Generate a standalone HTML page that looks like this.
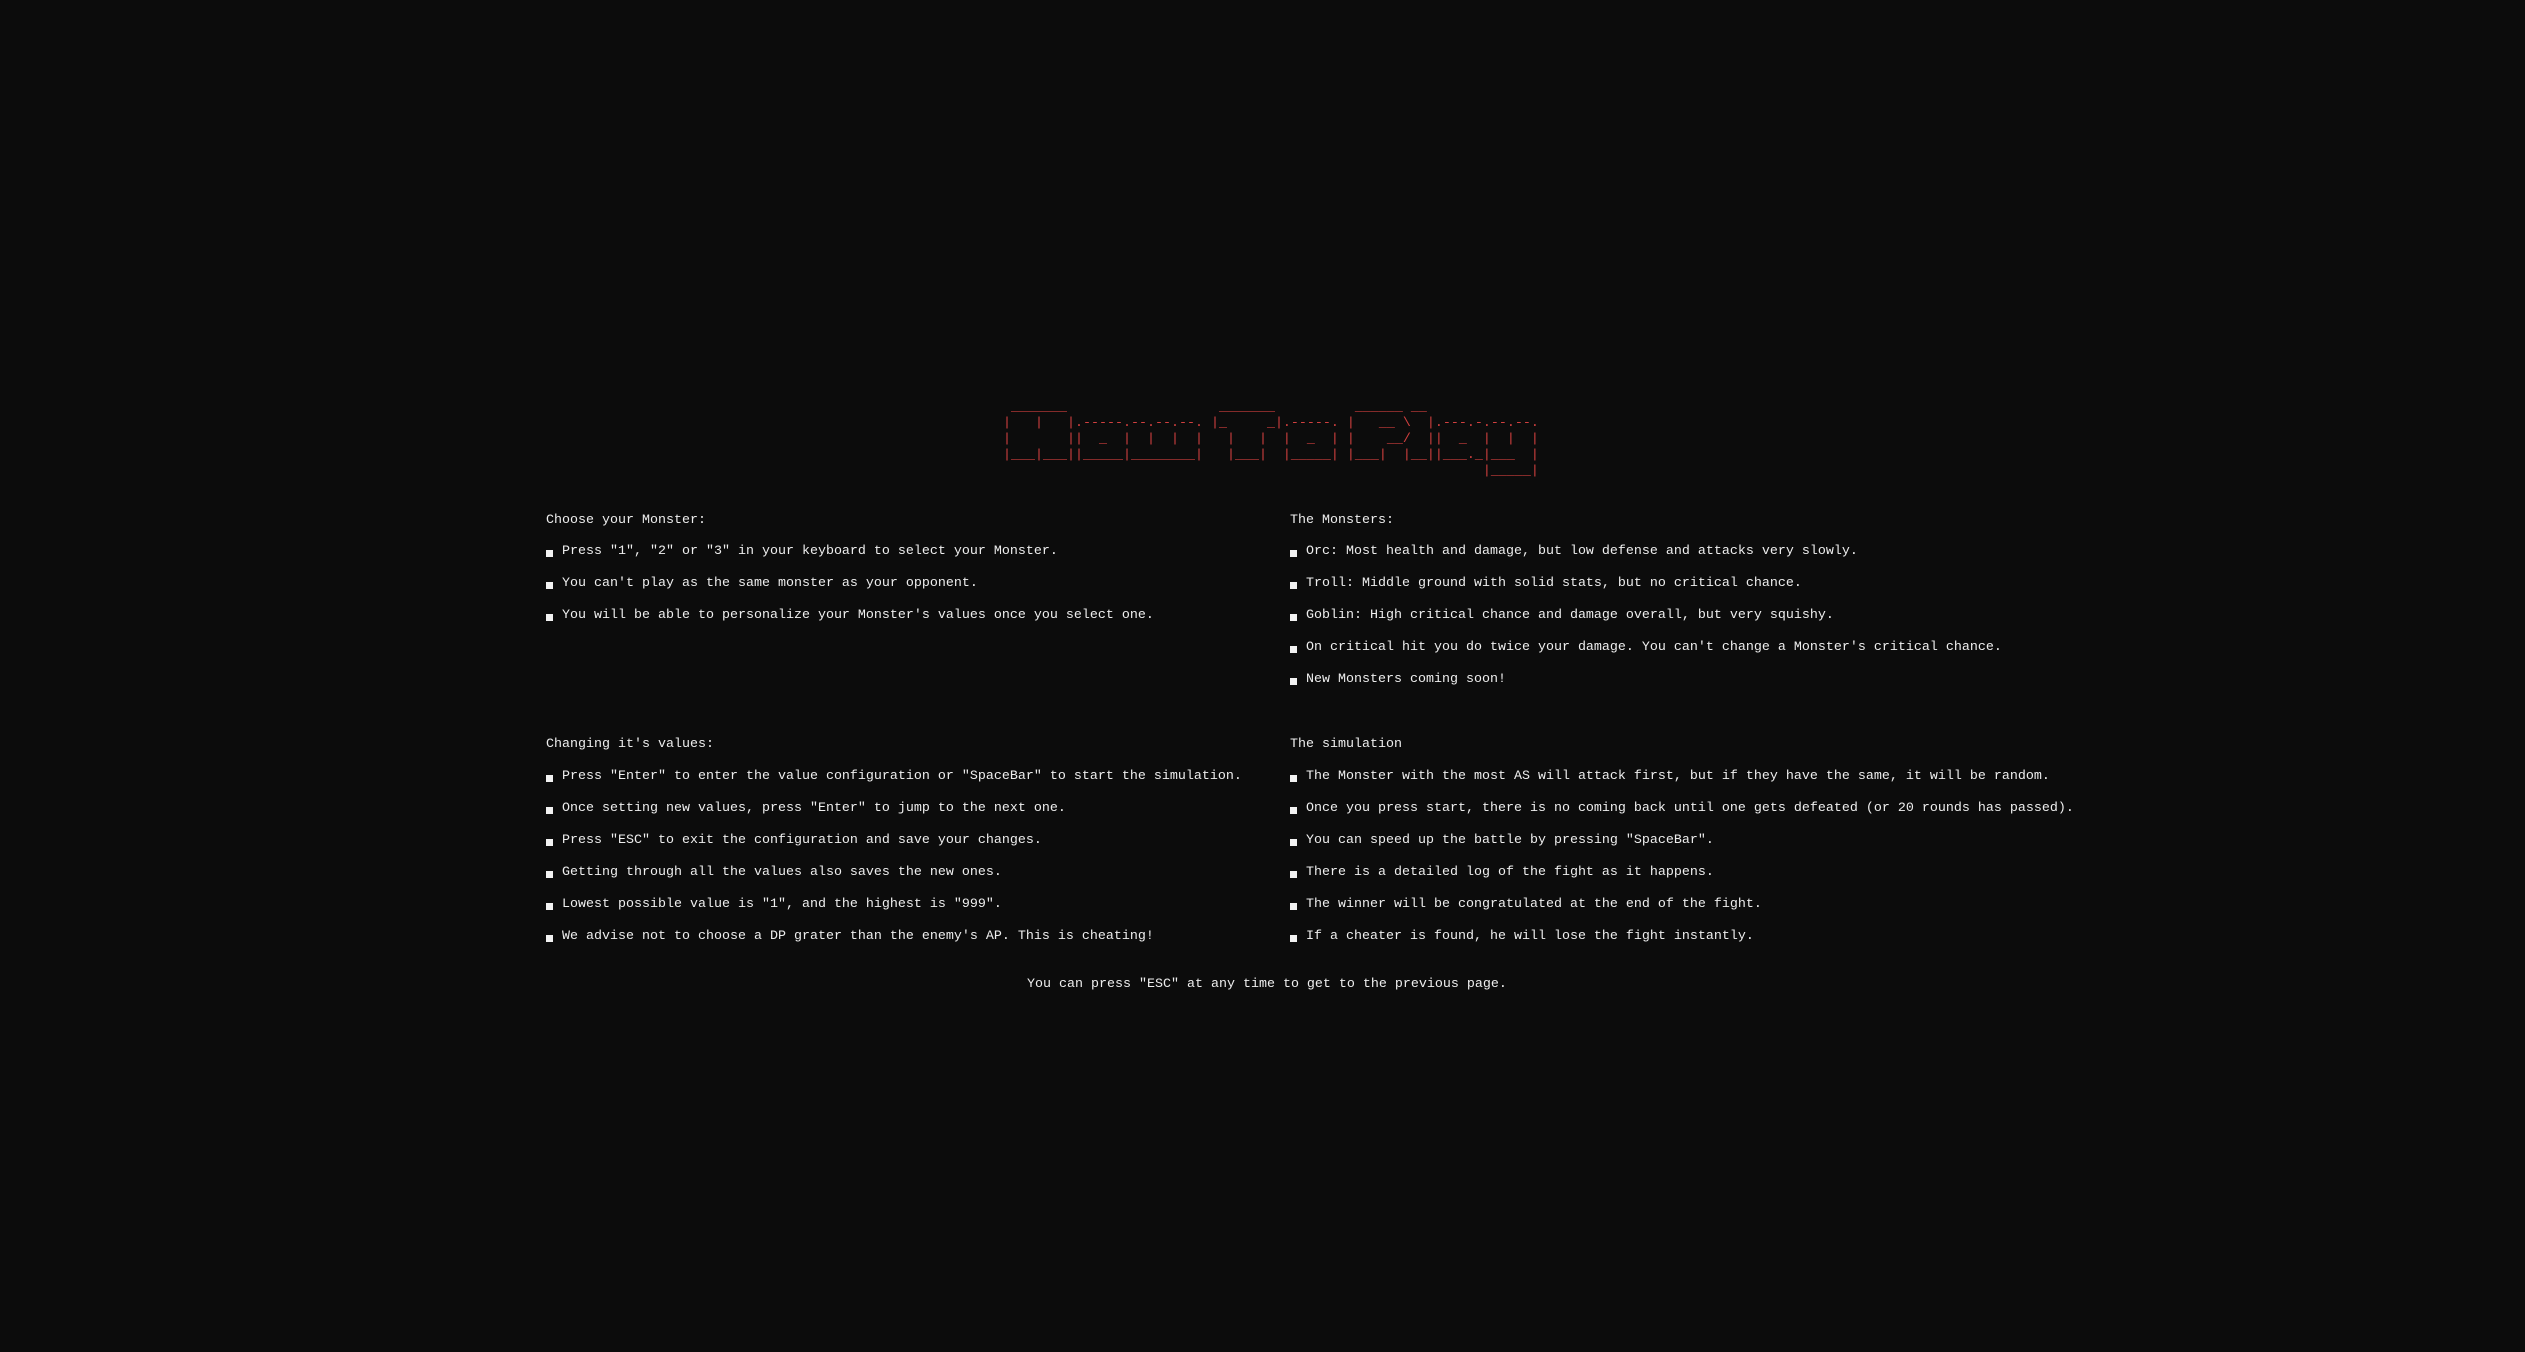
<!DOCTYPE html>
<html><head><meta charset="utf-8"><style>
html,body{margin:0;padding:0;background:#0c0c0c;}
body{width:2525px;height:1352px;position:relative;overflow:hidden;font-family:"Liberation Mono",monospace;font-size:13.33px;color:#eeeeee;}
.l{position:absolute;height:32px;line-height:32px;white-space:pre;margin-top:3px;}
.b{display:inline-block;width:7px;height:7px;background:#f2f2f2;margin-right:9px;vertical-align:-3px;}
pre{position:absolute;left:1003px;top:400px;margin:0;font-family:"Liberation Mono",monospace;font-size:13.33px;line-height:16px;color:#d2403f;}
</style></head><body>
<pre> _______                   _______          ______ __
|   |   |.-----.--.--.--. |_     _|.-----. |   __ \  |.---.-.--.--.
|       ||  _  |  |  |  |   |   |  |  _  | |    __/  ||  _  |  |  |
|___|___||_____|________|   |___|  |_____| |___|  |__||___._|___  |
                                                            |_____|</pre>

<div class="l" style="left:546px;top:502px">Choose your Monster:</div>
<div class="l" style="left:546px;top:533px"><span class="b"></span>Press "1", "2" or "3" in your keyboard to select your Monster.</div>
<div class="l" style="left:546px;top:565px"><span class="b"></span>You can't play as the same monster as your opponent.</div>
<div class="l" style="left:546px;top:597px"><span class="b"></span>You will be able to personalize your Monster's values once you select one.</div>

<div class="l" style="left:1290px;top:502px">The Monsters:</div>
<div class="l" style="left:1290px;top:533px"><span class="b"></span>Orc: Most health and damage, but low defense and attacks very slowly.</div>
<div class="l" style="left:1290px;top:565px"><span class="b"></span>Troll: Middle ground with solid stats, but no critical chance.</div>
<div class="l" style="left:1290px;top:597px"><span class="b"></span>Goblin: High critical chance and damage overall, but very squishy.</div>
<div class="l" style="left:1290px;top:629px"><span class="b"></span>On critical hit you do twice your damage. You can't change a Monster's critical chance.</div>
<div class="l" style="left:1290px;top:661px"><span class="b"></span>New Monsters coming soon!</div>

<div class="l" style="left:546px;top:726px">Changing it's values:</div>
<div class="l" style="left:546px;top:758px"><span class="b"></span>Press "Enter" to enter the value configuration or "SpaceBar" to start the simulation.</div>
<div class="l" style="left:546px;top:790px"><span class="b"></span>Once setting new values, press "Enter" to jump to the next one.</div>
<div class="l" style="left:546px;top:822px"><span class="b"></span>Press "ESC" to exit the configuration and save your changes.</div>
<div class="l" style="left:546px;top:854px"><span class="b"></span>Getting through all the values also saves the new ones.</div>
<div class="l" style="left:546px;top:886px"><span class="b"></span>Lowest possible value is "1", and the highest is "999".</div>
<div class="l" style="left:546px;top:918px"><span class="b"></span>We advise not to choose a DP grater than the enemy's AP. This is cheating!</div>

<div class="l" style="left:1290px;top:726px">The simulation</div>
<div class="l" style="left:1290px;top:758px"><span class="b"></span>The Monster with the most AS will attack first, but if they have the same, it will be random.</div>
<div class="l" style="left:1290px;top:790px"><span class="b"></span>Once you press start, there is no coming back until one gets defeated (or 20 rounds has passed).</div>
<div class="l" style="left:1290px;top:822px"><span class="b"></span>You can speed up the battle by pressing "SpaceBar".</div>
<div class="l" style="left:1290px;top:854px"><span class="b"></span>There is a detailed log of the fight as it happens.</div>
<div class="l" style="left:1290px;top:886px"><span class="b"></span>The winner will be congratulated at the end of the fight.</div>
<div class="l" style="left:1290px;top:918px"><span class="b"></span>If a cheater is found, he will lose the fight instantly.</div>

<div class="l" style="left:1027px;top:966px">You can press "ESC" at any time to get to the previous page.</div>
</body></html>
